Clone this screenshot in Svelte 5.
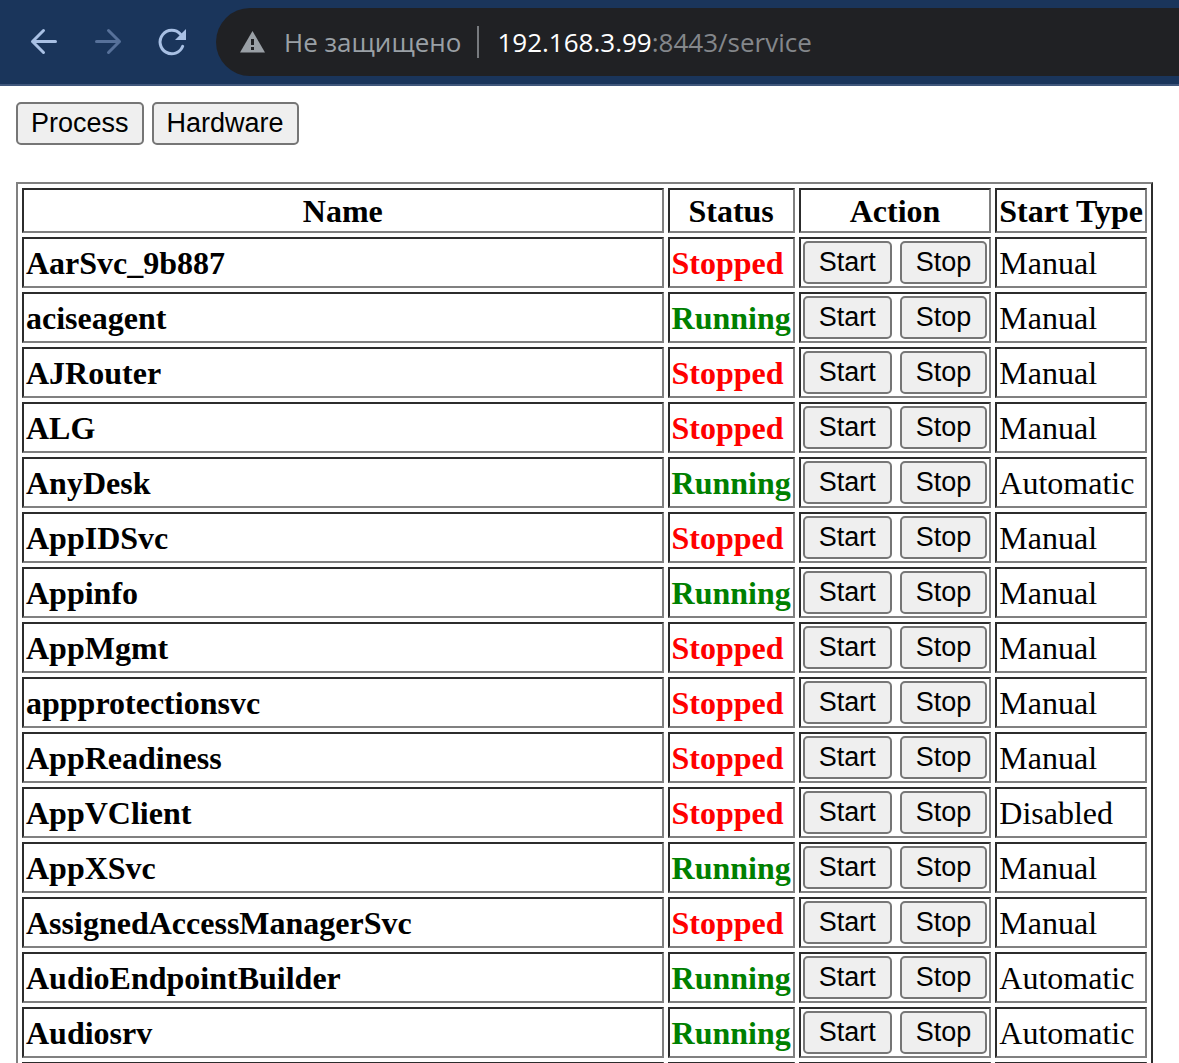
<script>
  const services = [
    ['AarSvc_9b887', 'Stopped', 'Manual'],
    ['aciseagent', 'Running', 'Manual'],
    ['AJRouter', 'Stopped', 'Manual'],
    ['ALG', 'Stopped', 'Manual'],
    ['AnyDesk', 'Running', 'Automatic'],
    ['AppIDSvc', 'Stopped', 'Manual'],
    ['Appinfo', 'Running', 'Manual'],
    ['AppMgmt', 'Stopped', 'Manual'],
    ['appprotectionsvc', 'Stopped', 'Manual'],
    ['AppReadiness', 'Stopped', 'Manual'],
    ['AppVClient', 'Stopped', 'Disabled'],
    ['AppXSvc', 'Running', 'Manual'],
    ['AssignedAccessManagerSvc', 'Stopped', 'Manual'],
    ['AudioEndpointBuilder', 'Running', 'Automatic'],
    ['Audiosrv', 'Running', 'Automatic'],
  ].map(([name, status, startType]) => ({ name, status, startType }));
</script>

<div class="window">
  <header class="toolbar">
    <nav class="nav" aria-label="Browser">
      <button class="icon" type="button" aria-label="Back">
        <svg viewBox="0 0 32 32"><path d="M27.500 15.500H4.500M15.500 4.500l-11 11 11 11" /></svg>
      </button>
      <button class="icon dim" type="button" aria-label="Forward">
        <svg viewBox="0 0 32 32"><path d="M4.500 15.500h23M16.500 4.500l11 11-11 11" /></svg>
      </button>
      <button class="icon" type="button" aria-label="Reload">
        <svg viewBox="0 0 32 32">
          <path d="M26.700 20.300A11.700 11.700 0 1 1 24.500 8.200" />
          <path class="solid" d="M30 3v11H19z" />
        </svg>
      </button>
    </nav>
    <div class="address">
      <svg class="warning" viewBox="0 0 26 24" aria-hidden="true">
        <path fill="#9aa0a6" d="M12.500 1 25 22.500H0z" />
        <path fill="#202124" d="M11 9h3v6h-3zM11 17h3v3h-3z" />
      </svg>
      <span class="security">Не защищено</span>
      <span class="divider"></span>
      <span class="url"><span class="host">192.168.3.99</span>:8443/service</span>
    </div>
  </header>

  <main>
    <div class="actions pages">
      <button class="push" type="button">Process</button>
      <button class="push" type="button">Hardware</button>
    </div>

    <table>
      <thead>
        <tr>
          <th class="name" scope="col">Name</th>
          <th scope="col">Status</th>
          <th scope="col">Action</th>
          <th scope="col">Start Type</th>
        </tr>
      </thead>
      <tbody>
        {#each services as service}
          <tr>
            <td class="strong">{service.name}</td>
            <td class="strong" class:running={service.status === 'Running'} class:stopped={service.status === 'Stopped'}>{service.status}</td>
            <td class="controls">
              <div class="actions">
                <button class="push" type="button" aria-label="Start {service.name}">Start</button>
                <button class="push" type="button" aria-label="Stop {service.name}">Stop</button>
              </div>
            </td>
            <td>{service.startType}</td>
          </tr>
        {/each}
        <tr class="blank"><td></td><td></td><td></td><td></td></tr>
      </tbody>
    </table>
  </main>
</div>

<style>
  :global(body) {
    margin: 0;
    background: #fff;
  }

  .window {
    height: 100vh;
    overflow: hidden;
    color: #000;
    font: 32px/37px 'Liberation Serif', 'Times New Roman', serif;
  }

  .toolbar {
    display: flex;
    align-items: center;
    padding: 8px 0 8px 28px;
    border-bottom: 2px solid #40577c;
    background: #1a355b;
  }

  .nav {
    display: flex;
    gap: 32px;
    margin-right: 28px;
  }

  .icon {
    display: block;
    padding: 0;
    border: 0;
    background: none;
    color: #a8c0e4;
  }

  .icon.dim {
    color: #57719a;
  }

  .icon svg {
    display: block;
    width: 32px;
    height: 32px;
    fill: none;
    stroke: currentColor;
    stroke-width: 3;
    stroke-linecap: round;
    stroke-linejoin: round;
  }

  .icon .solid {
    fill: currentColor;
    stroke: none;
  }

  .address {
    display: flex;
    flex: 1;
    align-items: center;
    height: 68px;
    padding-left: 24px;
    border-radius: 34px 0 0 34px;
    background: #202124;
    color: #9aa0a6;
    font: 26px/36px 'Open Sans', 'Noto Sans', sans-serif;
    white-space: nowrap;
  }

  .warning {
    width: 26px;
    height: 24px;
    margin-right: 18px;
  }

  .divider {
    width: 2px;
    height: 32px;
    margin: 0 18px 0 16px;
    background: #777a7e;
  }

  .url {
    color: #84878b;
  }

  .host {
    color: #fff;
  }

  main {
    padding: 16px 26px 0 16px;
  }

  .actions {
    display: flex;
    gap: 8px;
  }

  .push {
    height: 43px;
    padding: 0 14px 2px;
    border: 2px solid #767676;
    border-radius: 5px;
    background: #efefef;
    color: #000;
    font: 27px/32px 'Liberation Sans', Arial, sans-serif;
  }

  .pages .push {
    padding: 0 13px 2px;
  }

  table {
    width: 100%;
    margin-top: 37px;
    border: 2px solid;
    border-color: #808080 #2c2c2c #2c2c2c #808080;
    border-spacing: 4px;
  }

  th,
  td {
    padding: 3px 2px 1px;
    border: 2px solid;
    border-color: #2c2c2c #808080 #808080 #2c2c2c;
    text-align: left;
    white-space: nowrap;
  }

  th {
    text-align: center;
  }

  .controls {
    padding: 2px;
  }

  .name {
    width: 100%;
  }

  .strong {
    font-weight: bold;
  }

  .running {
    color: #008000;
  }

  .stopped {
    color: #f00;
  }

  .blank td {
    height: 43px;
  }
</style>
